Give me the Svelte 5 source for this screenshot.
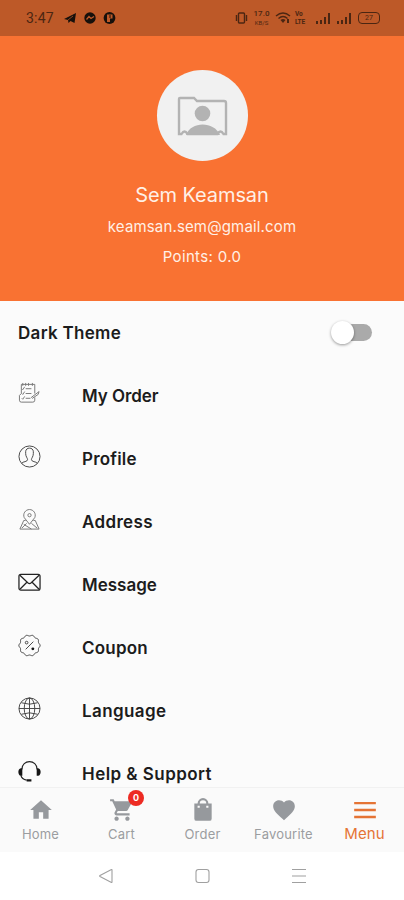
<script>
  const rows = [
    ['order', 'My Order', -0.05],
    ['profile', 'Profile', 0.2],
    ['address', 'Address', 0.35],
    ['message', 'Message', 0],
    ['coupon', 'Coupon', 0.2],
    ['language', 'Language', 0.4],
    ['support', 'Help & Support', 0.45]
  ];
  const tabs = [
    ['Home', 'M10 20v-6h4v6h5v-8h3L12 3 2 12h3v8z'],
    ['Cart', 'M7 18c-1.1 0-1.99.9-1.99 2S5.900 22 7 22s2-.9 2-2-.9-2-2-2zM1 2v2h2l3.600 7.590-1.350 2.450c-.16.28-.25.61-.25.96 0 1.100.9 2 2 2h12v-2H7.420c-.14 0-.25-.11-.25-.25l.03-.12.900-1.630h7.450c.75 0 1.410-.41 1.750-1.030l3.580-6.490A1 1 0 0 0 20 4H5.210l-.94-2zm16 16c-1.100 0-1.990.9-1.990 2s.89 2 1.990 2 2-.9 2-2-.9-2-2-2z'],
    ['Order', 'M20 6h-3a5 5 0 0 0-10 0H4v14a2 2 0 0 0 2 2h12a2 2 0 0 0 2-2zm-8-3a3 3 0 0 1 3 3H9a3 3 0 0 1 3-3zM7 8h2v2H7zm8 0h2v2h-2z'],
    ['Favourite', 'M12 21.350l-1.450-1.320C5.400 15.360 2 12.280 2 8.500 2 5.420 4.420 3 7.500 3c1.740 0 3.410.81 4.500 2.090C13.090 3.810 14.760 3 16.500 3 19.580 3 22 5.420 22 8.500c0 3.780-3.400 6.860-8.550 11.540z'],
    ['Menu', 'M2 4.500h20v2.200H2zm0 6.400h20v2.200H2zm0 6.400h20v2.200H2z']
  ];
  const coupon = Array.from({ length: 97 }, (_, i) => {
    const a = (i / 96) * Math.PI * 2;
    const r = 10.500 + 0.6 * Math.cos(a * 10);
    return `${12 + r * Math.cos(a)},${12 + r * Math.sin(a)}`;
  }).join(' ');
</script>

<div class="screen">
  <div class="status">
    <span class="time">3:47</span>
    <svg class="left" width="56" height="16" viewBox="0 0 56 16">
      <path d="M1 9 13 3l-1.500 10-4-2-2 2-.5-3z" /><path d="m5 10 5-4" stroke="#bd5928" stroke-width=".7" fill="none" />
      <circle cx="27" cy="8" r="5.700" /><path d="m23.500 9.500 2.500-3 2 2 3-2" stroke="#bd5928" stroke-width="1.300" fill="none" />
      <circle cx="46.500" cy="8" r="5.900" /><path d="M44 4.500h5.500v4H47V12h-3z" fill="#bd5928" /><path d="M47 5v3" stroke="#17100b" />
    </svg>
    <span class="space"></span>
    <svg width="13" height="16" viewBox="0 0 13 16"><rect x="3.500" y="3" width="6" height="10" rx="1" class="sl" /><path class="sl" d="M1.500 5v6m10-6v6" /></svg>
    <span class="speed"><b>17.0</b><i>KB/S</i></span>
    <svg class="wifi" width="16" height="16" viewBox="0 0 16 16"><path d="M1 6Q8 0 15 6M3.500 8.500q4.500-4 9 0" class="sl" stroke-width="1.600" /><path d="m5.500 10 2.500 3 2.500-3Q8 8 5.500 10zM12 9h2v4h-2z" /></svg>
    <span class="volte"><b>Vo</b><b>LTE</b></span>
    {#each [0, 1] as _}
      <svg class="signal" width="16" height="16" viewBox="0 0 16 16"><path d="M1 11h2v3H1zm4-1h2v4H5zm4-3h2v7H9zm4-4h2v11h-2z" /></svg>
    {/each}
    <span class="battery">27</span>
  </div>

  <header>
    <div class="avatar">
      <svg width="52" height="42" viewBox="0 0 52 42">
        <path d="M3 39V4q0-1 1-1h14l3 3h27q2 0 2 2v31h-2.500q-3-5-6 0H11.500q-3-5-6 0z" fill="#f1f1f1" stroke="#b3b3b3" stroke-width="2.400" />
        <circle cx="26.500" cy="18.500" r="7.800" /><path d="M10 40c5-14 28-14 34 0z" />
      </svg>
    </div>
    <h1>Sem Keamsan</h1>
    <p class="mail">keamsan.sem@gmail.com</p>
    <p class="points">Points: 0.0</p>
  </header>

  <main>
    <div class="row theme"><span class="label">Dark Theme</span><span class="toggle"><i></i></span></div>
    {#each rows as [kind, name, spacing]}
      <div class="row">
        <svg class="icon {kind}" width="23" height="23" viewBox="0 0 24 24">
          {#if kind === 'order'}
            <path d="M3.500 2.500h14V12M3.500 2.500V12l-2 2v5q0 2 2 2h12q2 0 2-2v-3M5 1v3m3-3v3m3-3v3m4-3v3M8 7h6m-6 5h6m-6 5h5" />
            <path d="m4 7 1 1 2-3m-3 7 1 1 2-3m-3 7 1 1 2-3m7 1 8-6-1 3-6 4z" />
          {:else if kind === 'profile'}
            <circle cx="12" cy="12" r="11" />
            <path d="M4 19c1-2 6-1 6-4 0-1-2-3-2-6V7c0-5 8-5 8 0v2c0 3-2 5-2 6 0 3 5 2 6 4" />
          {:else if kind === 'address'}
            <path d="M12 17 6.500 10a6 6 0 1 1 11 0zM8 13H6l-4 9h20l-4-9h-2M6 17l8 5m-10-1 5-5m5 0 6 5" /><circle cx="12" cy="7.500" r="1.700" />
          {:else if kind === 'message'}
            <rect x="1" y="3.500" width="22" height="16.500" rx="2" /><path d="m2 4.500 8.500 8q1.500 1.300 3 0l8.500-8M2 19l7-7m13 7-7-7" />
          {:else if kind === 'coupon'}
            <polygon points={coupon} /><path d="m8 16 8-8" /><circle cx="9" cy="9" r="1.400" /><circle class="solid" cx="15.500" cy="15.500" r="1.500" />
          {:else if kind === 'language'}
            <circle cx="12" cy="12" r="11" /><ellipse cx="12" cy="12" rx="5.500" ry="11" /><path d="M12 1v22M1 12h22M3.500 6Q12 9 20.500 6m-17 12q8.500-3 17 0" />
          {:else}
            <path d="M4 10C4-1 20-1 20 10M3 16q1 4 6 5" /><path class="solid" d="M4.500 8.500v8H3C-.5 16-.5 9 3 8.500zm15 0v8H21c3.500-.5 3.500-7.500 0-8zM9 20h5v2.500H9z" />
          {/if}
        </svg>
        <span class="label" style:letter-spacing="{spacing}px">{name}</span>
      </div>
    {/each}
  </main>

  <nav>
    {#each tabs as [name, path]}
      <div class="tab" class:active={name === 'Menu'}>
        <svg width="26" height="26" viewBox="0 0 24 24"><path d={path} fill-rule="evenodd" /></svg>
        <span>{name}</span>
        {#if name === 'Cart'}<b class="badge">0</b>{/if}
      </div>
    {/each}
  </nav>
  <footer>
    <svg width="16" height="16" viewBox="0 0 16 16"><path d="M15 2v12q0 .8-1 .3L3 8.500q-.8-.5 0-1L14 1.700q1-.5 1 .3z" /></svg>
    <svg width="16" height="16" viewBox="0 0 16 16"><rect x="2" y="1.500" width="13" height="13" rx="2.500" /></svg>
    <svg width="16" height="16" viewBox="0 0 16 16"><path d="M1 1.500h14M1 8h14M1 14.500h14" /></svg>
  </footer>
</div>

<style>
  .screen { width: 404px; height: 900px; display: flex; flex-direction: column; overflow: hidden; background: #fbfbfb; font-family: Inter, Roboto, sans-serif; }
  svg { display: block; flex: none; }
  h1, p { margin: 0; font-weight: 400; }
  .status { height: 36px; flex: none; display: flex; align-items: center; padding: 0 24px 0 26px; background: #bd5928; color: #4b2612; box-sizing: border-box; font-family: Roboto, sans-serif; }
  .status svg { fill: #17100b; }
  .status svg:not(.left) { fill: #4b2612; }
  .status .sl { fill: none; stroke: #4b2612; stroke-width: 1.400; }
  .time { font-size: 14px; width: 37px; letter-spacing: .2px; }
  .space { flex: 1; }
  .speed { width: 17px; margin-left: 1px; display: flex; flex-direction: column; align-items: center; }
  .speed b { font-size: 8px; line-height: 10px; font-weight: 500; }
  .speed i { font-size: 6px; line-height: 8px; font-style: normal; }
  .status > svg:nth-of-type(2) { margin-right: 4px; }
  .wifi { margin-left: 5px; }
  .volte { width: 14px; margin-left: 4px; display: flex; flex-direction: column; font-size: 6.500px; line-height: 8px; letter-spacing: -.2px; }
  .signal { margin-left: 6px; }
  .signal + .signal { margin-left: 5px; }
  .battery { width: 22px; height: 12px; box-sizing: border-box; border: 1.500px solid #4b2612; border-radius: 4px; margin-left: 6px; font-size: 7px; line-height: 10px; text-align: center; }
  header { height: 265px; flex: none; display: flex; flex-direction: column; align-items: center; box-sizing: border-box; padding-top: 34px; background: #f97232; color: #fff0e6; }
  .avatar { width: 91px; height: 91px; border-radius: 50%; background: #f1f1f1; display: flex; align-items: center; justify-content: center; }
  .avatar svg { fill: #b3b3b3; }
  h1 { font-size: 20px; line-height: 24px; margin-top: 22px; letter-spacing: -.1px; }
  .mail { font-size: 15px; line-height: 20px; margin-top: 10px; letter-spacing: .15px; }
  .points { font-size: 15px; line-height: 20px; margin-top: 10px; letter-spacing: .35px; }
  main { height: 486px; flex: none; overflow: hidden; }
  .row { height: 63px; display: flex; align-items: center; padding-left: 18px; box-sizing: border-box; }
  .icon { fill: none; stroke: #444; stroke-width: 1; margin: -4px 41px 0 0; }
  .icon.order, .icon.address { stroke: #777; }
  .icon.message { stroke: #222; stroke-width: 1.300; }
  .icon.support { stroke: #222; stroke-width: 1.200; }
  .solid { fill: #151515; stroke: none; }
  .label { font-size: 17px; line-height: 22px; font-weight: 600; color: #1c1c1c; white-space: nowrap; margin-top: 1px; }
  .theme .label { letter-spacing: .3px; }
  .theme { justify-content: space-between; padding-right: 32px; }
  .toggle { width: 37px; height: 17px; box-sizing: border-box; border-radius: 9px; background: #aaa; display: flex; align-items: center; }
  .toggle i { width: 23px; height: 23px; margin-left: -4px; flex: none; background: #fff; border-radius: 50%; box-shadow: 0 1px 3px #0006; }
  nav { height: 65px; flex: none; display: flex; background: #fafafa; border-top: 1px solid #f1f1f1; box-sizing: border-box; }
  .tab { width: 81px; flex: none; display: flex; flex-direction: column; align-items: center; position: relative; padding-top: 9px; box-sizing: border-box; color: #9b9da0; font-size: 13px; line-height: 18px; letter-spacing: .2px; }
  .tab svg { fill: #96999d; margin-bottom: 2px; }
  .tab.active { color: #e57435; font-size: 15px; letter-spacing: .1px; }
  .tab.active svg { fill: #e57435; }
  .badge { position: absolute; left: 47px; top: 2px; width: 16px; height: 16px; border-radius: 50%; background: #ed2b23; color: #fff; font-size: 9px; line-height: 16px; text-align: center; letter-spacing: 0; }
  footer { height: 48px; flex: none; display: flex; justify-content: space-between; align-items: center; padding: 0 97px; background: #fff; }
  footer svg { fill: none; stroke: #a0a0a0; stroke-width: 1.100; }
</style>
